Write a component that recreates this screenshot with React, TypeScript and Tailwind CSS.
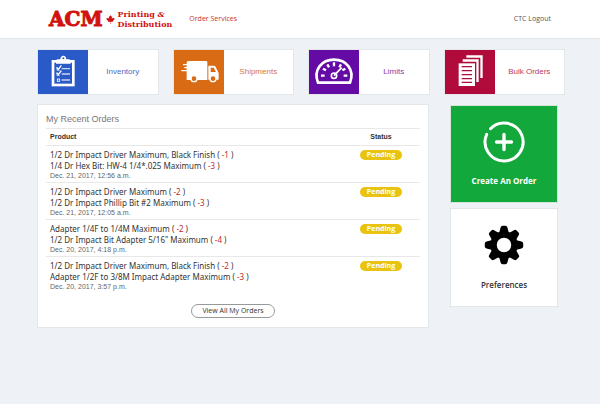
import type { ReactNode } from "react";
import { FaCanadianMapleLeaf } from "react-icons/fa";

function ClipboardIcon() {
  return (
    <svg viewBox="0 0 150 132" className="h-full w-full" fill="none" aria-hidden="true">
      <rect x="45" y="34" width="61" height="71" stroke="#fff" strokeWidth="8" />
      <path d="M54 41V33q0-4 5-5h8q1-11 9-11t9 11h8q5 1 5 5v8z" fill="#fff" />
      <circle cx="76" cy="25" r="3" fill="#2a5ac8" />
      <g stroke="#fff" strokeWidth="4">
        <path d="M71 56h25M71 72h25M71 90h25" strokeOpacity=".75" />
        <path d="M56 52l5 6 9-12M56 68l5 6 9-12" />
        <path d="M57 52v9h8M57 68v9h8" strokeWidth="2" />
        <rect x="58" y="87" width="7" height="7" strokeWidth="2.5" />
      </g>
    </svg>
  );
}

function TruckIcon() {
  return (
    <svg viewBox="0 0 150 132" className="h-full w-full" fill="none" aria-hidden="true">
      <path d="M43 33h53q4 0 4 4v53H38V38q0-5 5-5z" fill="#fff" />
      <path d="M103 49q0-2 2-2h14q4 0 6 4l7 14q2 3 2 6v16q0 2-2 2h-29z" fill="#fff" />
      <path d="M110 53h9l7 13h-16z" fill="#d96b15" />
      <path d="M27 44h12M31 53h8M22 62h17" stroke="#fff" strokeWidth="4" />
      <circle cx="60" cy="86" r="9" fill="#d96b15" stroke="#fff" strokeWidth="4" />
      <circle cx="117" cy="86" r="9" fill="#d96b15" stroke="#fff" strokeWidth="4" />
    </svg>
  );
}

function GaugeIcon() {
  return (
    <svg viewBox="0 0 150 132" className="h-full w-full" fill="none" stroke="#fff" aria-hidden="true">
      <path d="M27 98C12 60 38 29 75 29s63 31 48 69z" strokeWidth="8" strokeLinejoin="round" />
      <path
        d="M36 77h11M42 56l9 5M55 43l5 9M75 37v12M96 43l-5 9M109 56l-9 5M115 77h-11"
        strokeWidth="7"
      />
      <circle cx="75" cy="77" r="8" strokeWidth="5" />
      <path d="M75 77l23-24" strokeWidth="5" />
    </svg>
  );
}

function PagesIcon() {
  return (
    <svg viewBox="0 0 150 132" className="h-full w-full" fill="none" aria-hidden="true">
      <path d="M64 16h49v68h-7V23H64z" fill="#fff" />
      <path d="M53 28h48v68h-7V35H53z" fill="#fff" />
      <rect x="41" y="40" width="49" height="68" fill="#fff" />
      <path d="M50 50h31M50 62h31M50 74h31M50 86h31M50 97h31" stroke="#b00b3b" strokeWidth="4" />
    </svg>
  );
}

function PlusCircleIcon() {
  return (
    <svg viewBox="0 0 42 42" className="size-[42px]" fill="none" stroke="#fff" strokeLinecap="round" aria-hidden="true">
      <path d="M7.5 7.7A19 19 0 1 1 3.7 13.3" strokeWidth="3" />
      <path d="M21 13.5v15M13.5 21h15" strokeWidth="3.4" />
    </svg>
  );
}

function GearIcon() {
  return (
    <svg viewBox="0 0 40 40" className="size-10" aria-hidden="true">
      <circle cx="20" cy="20" r="10.5" fill="none" stroke="#000" strokeWidth="6.5" />
      {[0, 45, 90, 135, 180, 225, 270, 315].map((angle) => (
        <path
          key={angle}
          d="M15 8.5l1.6-6q.4-1.7 2-1.7h2.8q1.6 0 2 1.7l1.6 6z"
          transform={`rotate(${angle} 20 20)`}
        />
      ))}
    </svg>
  );
}

const tiles: { label: string; box: string; text: string; icon: ReactNode }[] = [
  { label: "Inventory", box: "bg-[#2a5ac8]", text: "text-[#4d6cc4]", icon: <ClipboardIcon /> },
  { label: "Shipments", box: "bg-[#d96b15]", text: "text-[#d9743f]", icon: <TruckIcon /> },
  { label: "Limits", box: "bg-[#640aa5]", text: "text-[#7e42b0]", icon: <GaugeIcon /> },
  { label: "Bulk Orders", box: "bg-[#b00b3b]", text: "text-[#b53a5f]", icon: <PagesIcon /> },
];

const orders = [
  {
    items: [
      ["1/2 Dr Impact Driver Maximum, Black Finish", "-1"],
      ["1/4 Dr Hex Bit: HW-4 1/4*.025 Maximum", "-3"],
    ],
    date: "Dec. 21, 2017, 12:56 a.m.",
  },
  {
    items: [
      ["1/2 Dr Impact Driver Maximum", "-2"],
      ["1/2 Dr Impact Phillip Bit #2 Maximum", "-3"],
    ],
    date: "Dec. 21, 2017, 12:05 a.m.",
  },
  {
    items: [
      ["Adapter 1/4F to 1/4M Maximum", "-2"],
      ['1/2 Dr Impact Bit Adapter 5/16" Maximum', "-4"],
    ],
    date: "Dec. 20, 2017, 4:18 p.m.",
  },
  {
    items: [
      ["1/2 Dr Impact Driver Maximum, Black Finish", "-2"],
      ["Adapter 1/2F to 3/8M Impact Adapter Maximum", "-3"],
    ],
    date: "Dec. 20, 2017, 3:57 p.m.",
  },
];

function Header() {
  return (
    <header className="flex h-[39px] items-center border-b border-[#e2e5e8] bg-white px-[49px]">
      <a href="#home" className="flex items-center font-['DejaVu_Serif',serif] font-bold text-[#d0130f]">
        <span className="text-[20px] leading-5 [-webkit-text-stroke:1px_#d0130f]">ACM</span>
        <FaCanadianMapleLeaf className="mx-[3px] size-[9px]" />
        <span className="text-[8px] leading-[10px]">
          Printing <i>&amp;</i>
          <br />
          Distribution
        </span>
      </a>
      <nav className="ml-[17px] flex flex-1 justify-between text-[7px]">
        <a href="#services" className="text-[#c9302c]">
          Order Services
        </a>
        <a href="#logout" className="text-[#555]">
          CTC Logout
        </a>
      </nav>
    </header>
  );
}

export default function App() {
  return (
    <div className="min-h-screen bg-[#eef1f6] font-['Open_Sans',sans-serif] text-[#333]">
      <Header />
      <main className="pt-[10px] pr-[35px] pb-6 pl-[37px]">
        <nav className="grid grid-cols-4 gap-[14px]">
          {tiles.map((tile) => (
            <a key={tile.label} href="#tile" className="flex h-[46px] border border-[#e4e7ea] bg-white">
              <span className={`h-full w-[50px] shrink-0 ${tile.box}`}>{tile.icon}</span>
              <span
                className={`flex flex-1 items-center justify-center font-['Liberation_Sans',sans-serif] text-[8px] ${tile.text}`}
              >
                {tile.label}
              </span>
            </a>
          ))}
        </nav>

        <div className="mt-[9px] flex items-start gap-[21px] pr-[7px]">
          <section className="flex-1 border border-[#e4e7ea] bg-white px-2 py-[9px]">
            <h2 className="font-['Liberation_Sans',sans-serif] text-[9px] leading-[10px] text-[#777]">
              My Recent Orders
            </h2>
            <table className="mt-1 w-full border-collapse text-left">
              <thead className="font-['Liberation_Sans',sans-serif] text-[7px] leading-4">
                <tr className="h-[17px] border-y border-[#e8e8e8]">
                  <th className="p-0 pl-1 font-bold">Product</th>
                  <th className="w-[78px] p-0 text-center font-bold">Status</th>
                </tr>
              </thead>
              <tbody>
                {orders.map((order, i) => (
                  <tr key={i} className="h-[37px] border-t border-[#e8e8e8] align-top">
                    <td className="p-0 pt-[3px] pl-1">
                      {order.items.map(([name, quantity]) => (
                        <div key={name} className="font-['Noto_Sans',sans-serif] text-[8px] leading-[11px]">
                          {name} ( <span className="text-[#c0282d]">{quantity}</span> )
                        </div>
                      ))}
                      <div className="font-['Liberation_Sans',sans-serif] text-[7px] leading-[9px] text-[#666]">
                        {order.date}
                      </div>
                    </td>
                    <td className="p-0 pt-1">
                      <span className="mx-auto block h-[10px] w-[42px] rounded-full bg-[#e9c30f] text-center text-[7px] leading-[10px] font-bold text-white">
                        Pending
                      </span>
                    </td>
                  </tr>
                ))}
              </tbody>
            </table>
            <button
              type="button"
              className="mx-auto mt-[10px] block h-[14px] w-[84px] rounded-full border border-[#999] text-[7px] leading-3"
            >
              View All My Orders
            </button>
          </section>

          <aside className="flex w-[108px] flex-col gap-[5px] pt-px">
            <a
              href="#create"
              className="flex h-[98px] flex-col items-center border border-[#d5e5dc] bg-[#12a83c] pt-[15px] text-[8px] font-bold text-white"
            >
              <PlusCircleIcon />
              <span className="mt-3 leading-3">Create An Order</span>
            </a>
            <a
              href="#preferences"
              className="flex h-[99px] flex-col items-center border border-[#e4e7ea] bg-white pt-4 text-[8px] font-semibold"
            >
              <GearIcon />
              <span className="mt-[14px] leading-3">Preferences</span>
            </a>
          </aside>
        </div>
      </main>
    </div>
  );
}
